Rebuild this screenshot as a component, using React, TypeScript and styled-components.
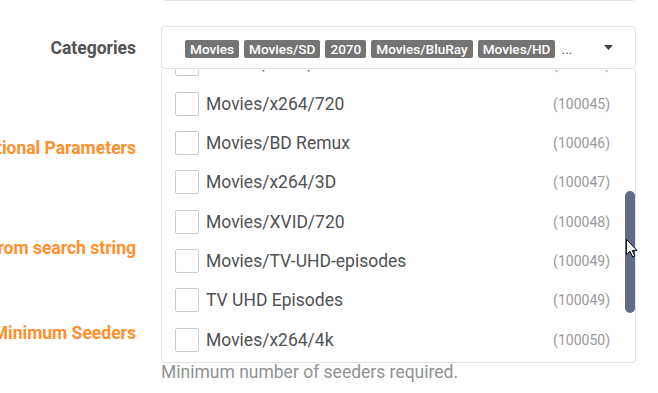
import React, { useLayoutEffect, useRef } from 'react';
import styled, { createGlobalStyle } from 'styled-components';

const GlobalStyle = createGlobalStyle`
  html, body {
    margin: 0;
    padding: 0;
    background: #fff;
    overflow: hidden;
  }
  body {
    font-family: Roboto, "Noto Sans", Arial, sans-serif;
    color: #515253;
  }
`

type Category = {
  name: string;
  id: number;
}

const categories: Category[] = [
  { name: 'Movies', id: 2000 },
  { name: 'Movies/Foreign', id: 2010 },
  { name: 'Movies/Other', id: 2020 },
  { name: 'Movies/SD', id: 2030 },
  { name: 'Movies/HD', id: 2040 },
  { name: 'Movies/UHD', id: 2045 },
  { name: 'Movies/x264/1080', id: 100044 },
  { name: 'Movies/x264/720', id: 100045 },
  { name: 'Movies/BD Remux', id: 100046 },
  { name: 'Movies/x264/3D', id: 100047 },
  { name: 'Movies/XVID/720', id: 100048 },
  { name: 'Movies/TV-UHD-episodes', id: 100049 },
  { name: 'TV UHD Episodes', id: 100049 },
  { name: 'Movies/x264/4k', id: 100050 },
  { name: 'Movies/x265/4k', id: 100051 },
  { name: 'Movies/x265/1080', id: 100052 },
  { name: 'Movies/WEB-DL', id: 100053 },
]

const selectedTags = ['Movies', 'Movies/SD', '2070', 'Movies/BluRay', 'Movies/HD']

const ROW_HEIGHT = 39.3
const SCROLL_TOP = 261

const Page = styled.div`
  position: relative;
  width: 658px;
  height: 393px;
  overflow: hidden;
`

const Form = styled.div`
  display: flex;
  flex-direction: column;
  margin-top: -41px;
`

const Group = styled.div<{ $mb?: number }>`
  display: grid;
  grid-template-columns: 136px 475px;
  column-gap: 25px;
  align-items: start;
  margin-bottom: ${p => p.$mb ?? 0}px;
`

const Label = styled.label<{ $advanced?: boolean; $h?: number }>`
  display: flex;
  justify-content: flex-end;
  align-items: center;
  height: ${p => p.$h ?? 42}px;
  white-space: nowrap;
  font-size: 17.5px;
  font-weight: bold;
  color: ${p => (p.$advanced ? '#ff902b' : '#515253')};
`

const Control = styled.div`
  position: relative;
  display: flex;
  flex-direction: column;
`

const TextInput = styled.div`
  box-sizing: border-box;
  height: 42px;
  border: 1px solid #dde6e9;
  border-radius: 4px;
  background: #fff;
`

const HelpText = styled.div`
  margin-top: 8px;
  font-size: 17.5px;
  color: #909293;
  white-space: nowrap;
`

const SelectBox = styled.div`
  box-sizing: border-box;
  height: 43px;
  display: flex;
  align-items: center;
  padding: 0 22px 0 23px;
  border: 1px solid #dde6e9;
  border-radius: 4px;
  background: #fff;
`

const Tags = styled.div`
  flex: 1;
  display: flex;
  align-items: center;
  gap: 5px;
  padding-top: 3px;
  overflow: hidden;
`

const Tag = styled.span`
  display: inline-block;
  height: 18px;
  line-height: 18px;
  padding: 0 5px;
  border-radius: 2px;
  background: #747474;
  color: #fff;
  font-size: 13.6px;
  font-weight: 500;
  white-space: nowrap;
`

const More = styled.span`
  font-size: 14px;
  color: #515253;
  margin-left: 1px;
`

const Caret = styled.svg`
  display: block;
  width: 9px;
  height: 5px;
  fill: #3a3f51;
`

const Menu = styled.div`
  position: absolute;
  top: calc(100% + 1px);
  left: 0;
  right: 0;
  box-sizing: border-box;
  height: 293px;
  border: 1px solid #dde6e9;
  border-top: none;
  border-radius: 0 0 4px 4px;
  background: #fff;
  z-index: 2;
`

const MenuScroll = styled.div`
  height: 100%;
  overflow: hidden;
`

const Option = styled.div`
  box-sizing: border-box;
  height: ${ROW_HEIGHT}px;
  display: flex;
  align-items: center;
  padding: 0 25px 0 13px;
`

const CheckBox = styled.span`
  box-sizing: border-box;
  flex: none;
  width: 24px;
  height: 24px;
  margin-right: 7px;
  border: 1px solid #c9cdd0;
  border-radius: 2px;
  background: #fff;
`

const OptionName = styled.span`
  flex: 1;
  font-size: 17.5px;
  color: #515253;
  white-space: nowrap;
`

const OptionId = styled.span`
  font-size: 14px;
  color: #999;
`

const ScrollThumb = styled.div`
  position: absolute;
  top: 121px;
  right: 0;
  width: 10px;
  height: 122px;
  border-radius: 5px;
  background: #606a8b;
`

const Pointer = styled.svg`
  position: absolute;
  left: 626px;
  top: 239px;
  width: 12px;
  height: 19px;
  z-index: 5;
`

function CategorySelect() {
  const scrollRef = useRef<HTMLDivElement>(null)

  useLayoutEffect(() => {
    if (scrollRef.current) scrollRef.current.scrollTop = SCROLL_TOP
  }, [])

  return (
    <Control>
      <SelectBox>
        <Tags>
          {selectedTags.map(t => <Tag key={t}>{t}</Tag>)}
          <More>...</More>
        </Tags>
        <Caret viewBox="0 0 9 5">
          <polygon points="0,0 9,0 4.5,5" />
        </Caret>
      </SelectBox>
      <Menu>
        <MenuScroll ref={scrollRef}>
          {categories.map((c, i) => (
            <Option key={i}>
              <CheckBox />
              <OptionName>{c.name}</OptionName>
              <OptionId>({c.id})</OptionId>
            </Option>
          ))}
        </MenuScroll>
        <ScrollThumb />
      </Menu>
    </Control>
  )
}

export default function App() {
  return (
    <Page>
      <GlobalStyle />
      <Form>
        <Group $mb={25}>
          <Label>API Path</Label>
          <Control><TextInput /></Control>
        </Group>
        <Group $mb={58}>
          <Label $h={43}>Categories</Label>
          <CategorySelect />
        </Group>
        <Group $mb={58}>
          <Label $advanced>Additional Parameters</Label>
          <Control><TextInput /></Control>
        </Group>
        <Group $mb={43}>
          <Label $advanced>Remove year from search string</Label>
          <Control><TextInput /></Control>
        </Group>
        <Group>
          <Label $advanced>Minimum Seeders</Label>
          <Control>
            <TextInput />
            <HelpText>Minimum number of seeders required.</HelpText>
          </Control>
        </Group>
      </Form>
      <Pointer viewBox="0 0 12 19">
        <path d="M0.5 0.5 L0.5 15.5 L4 12.2 L6.6 18 L8.8 17 L6.3 11.4 L11 11.4 Z" fill="#fff" stroke="#000" strokeWidth="1" strokeLinejoin="round" />
      </Pointer>
    </Page>
  )
}
